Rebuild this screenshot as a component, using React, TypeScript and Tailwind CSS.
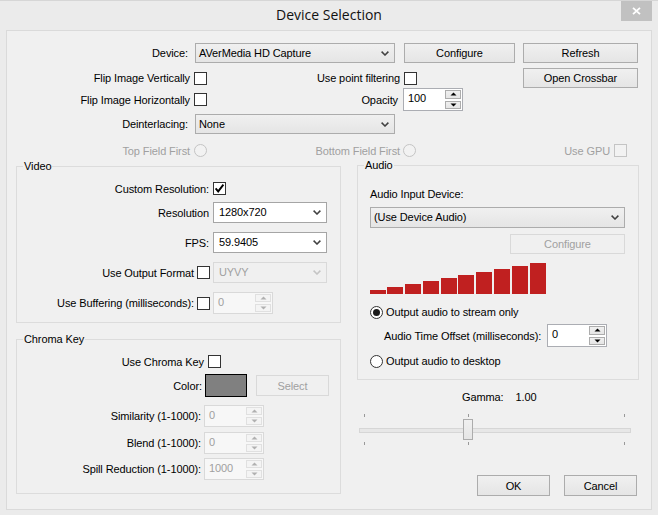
import React from "react";

const Chevron = ({ disabled = false }: { disabled?: boolean }) => (
  <svg width="8" height="5" viewBox="0 0 8 5" className="shrink-0">
    <path d="M0.6 0.6 L4 4 L7.4 0.6" fill="none" stroke={disabled ? "#c4c4c4" : "#404040"} strokeWidth="1.5" />
  </svg>
);

const Checkbox = ({ checked = false, disabled = false }: { checked?: boolean; disabled?: boolean }) => (
  <div
    className={`w-[13px] h-[13px] shrink-0 border flex items-center justify-center ${
      disabled ? "border-[#c4c4c4] bg-[#f2f2f2]" : "border-[#333333] bg-white"
    }`}
  >
    {checked && (
      <svg width="11" height="11" viewBox="0 0 11 11">
        <path d="M1.6 5.4 L4.2 8.4 L9.4 1.6" fill="none" stroke="#000" strokeWidth="1.9" />
      </svg>
    )}
  </div>
);

const Radio = ({ checked = false, disabled = false }: { checked?: boolean; disabled?: boolean }) => (
  <div
    className={`w-[13px] h-[13px] shrink-0 rounded-full border flex items-center justify-center ${
      disabled ? "border-[#c4c4c4] bg-[#f2f2f2]" : "border-[#333333] bg-white"
    }`}
  >
    {checked && <div className="w-[7px] h-[7px] rounded-full bg-[#1a1a1a]" />}
  </div>
);

const Button = ({
  children,
  disabled = false,
  className = "",
}: {
  children: React.ReactNode;
  disabled?: boolean;
  className?: string;
}) => (
  <div
    className={`shrink-0 flex items-center justify-center border ${
      disabled
        ? "border-[#d9d9d9] bg-[#f0f0f0] text-[#a0a0a0]"
        : "border-[#acacac] bg-linear-to-b from-[#f0f0f0] to-[#e5e5e5] text-black"
    } ${className}`}
  >
    {children}
  </div>
);

const Combo = ({
  value,
  variant = "button",
  className = "",
}: {
  value: string;
  variant?: "button" | "white" | "disabled";
  className?: string;
}) => {
  const v =
    variant === "white"
      ? "border-[#a5a5a5] bg-white text-black pl-[5px]"
      : variant === "disabled"
      ? "border-[#d9d9d9] bg-[#f0f0f0] text-[#a0a0a0] pl-[5px]"
      : "border-[#acacac] bg-linear-to-b from-[#f0f0f0] to-[#e5e5e5] text-black pl-[3px]";
  return (
    <div className={`shrink-0 flex items-center justify-between border pr-[5px] ${v} ${className}`}>
      <span className="pb-[1px]">{value}</span>
      <Chevron disabled={variant === "disabled"} />
    </div>
  );
};

const Tri = ({ up, disabled }: { up: boolean; disabled: boolean }) => (
  <svg width="7" height="4" viewBox="0 0 7 4">
    <path d={up ? "M0.5 3.5 L3.5 0.5 L6.5 3.5 Z" : "M0.5 0.5 L3.5 3.5 L6.5 0.5 Z"} fill={disabled ? "#b0b0b0" : "#000"} />
  </svg>
);

const Spin = ({
  value,
  disabled = false,
  className = "",
}: {
  value: string;
  disabled?: boolean;
  className?: string;
}) => (
  <div
    className={`shrink-0 flex border ${
      disabled ? "border-[#d9d9d9] bg-[#f7f7f7] text-[#a0a0a0]" : "border-[#abadb3] bg-white text-black"
    } ${className}`}
  >
    <div className="flex-1 flex items-center pl-[4px] pb-[3px]">{value}</div>
    <div className="w-[17px] flex flex-col gap-[2px] pr-[1px] py-[1px]">
      <div
        className={`flex-1 border flex items-center justify-center ${
          disabled ? "border-[#e0e0e0] bg-[#f4f4f4]" : "border-[#acacac] bg-linear-to-b from-[#f0f0f0] to-[#e5e5e5]"
        }`}
      >
        <Tri up disabled={disabled} />
      </div>
      <div
        className={`flex-1 border flex items-center justify-center ${
          disabled ? "border-[#e0e0e0] bg-[#f4f4f4]" : "border-[#acacac] bg-linear-to-b from-[#f0f0f0] to-[#e5e5e5]"
        }`}
      >
        <Tri up={false} disabled={disabled} />
      </div>
    </div>
  </div>
);

const Group = ({
  label,
  className = "",
  children,
}: {
  label: string;
  className?: string;
  children: React.ReactNode;
}) => (
  <div className={`relative border border-[#dcdcdc] ${className}`}>
    <span className="absolute top-[-8px] left-[6px] px-[1px] bg-[#f0f0f0] leading-[14px]">{label}</span>
    {children}
  </div>
);

const bars = [
  { h: "h-[4px]", ml: "ml-0" },
  { h: "h-[7px]", ml: "ml-[1px]" },
  { h: "h-[10px]", ml: "ml-[2px]" },
  { h: "h-[13px]", ml: "ml-[2px]" },
  { h: "h-[16px]", ml: "ml-[2px]" },
  { h: "h-[19px]", ml: "ml-[1px]" },
  { h: "h-[22px]", ml: "ml-[2px]" },
  { h: "h-[25px]", ml: "ml-[2px]" },
  { h: "h-[28px]", ml: "ml-[2px]" },
  { h: "h-[31px]", ml: "ml-[2px]" },
];

export default function App() {
  return (
    <div className="w-[658px] h-[515px] overflow-hidden bg-[#ebebeb] border-t border-[#d6d6d6] font-['Liberation_Sans',Arial,sans-serif] text-[11px] tracking-[-0.1px] text-black leading-[14px]">
      {/* Title bar */}
      <div className="relative h-[29px] flex items-center justify-center">
        <span className="font-['Open_Sans',sans-serif] text-[14px] tracking-normal text-[#111] pb-[1px]">Device Selection</span>
        <div className="absolute top-0 right-[6px] w-[31px] h-[20px] bg-[#c1c1c1] flex items-center justify-center">
          <svg width="9" height="8" viewBox="0 0 9 8">
            <path d="M1 0.8 L8 7.2 M8 0.8 L1 7.2" stroke="#fff" strokeWidth="1.8" />
          </svg>
        </div>
      </div>

      {/* Client area */}
      <div className="ml-[6px] w-[646px] h-[480px] border border-[#dadada] bg-[#f0f0f0]">
        <div className="pt-[12px]">
          {/* Row 1 */}
          <div className="flex items-center h-[20px]">
            <div className="w-[181px] text-right">Device:</div>
            <Combo value="AVerMedia HD Capture" className="ml-[7px] w-[200px] h-[20px]" />
            <Button className="ml-[9px] w-[111px] h-[20px]">Configure</Button>
            <Button className="ml-[8px] w-[115px] h-[20px]">Refresh</Button>
          </div>
          {/* Row 2 */}
          <div className="flex items-center h-[20px] mt-[5px]">
            <div className="w-[183px] text-right">Flip Image Vertically</div>
            <div className="ml-[4px]">
              <Checkbox />
            </div>
            <div className="w-[193px] text-right">Use point filtering</div>
            <div className="ml-[4px]">
              <Checkbox />
            </div>
            <Button className="ml-[106px] w-[115px] h-[20px]">Open Crossbar</Button>
          </div>
          {/* Row 3 */}
          <div className="flex items-center h-[23px]">
            <div className="w-[183px] text-right">Flip Image Horizontally</div>
            <div className="ml-[4px]">
              <Checkbox />
            </div>
            <div className="w-[191px] text-right">Opacity</div>
            <Spin value="100" className="ml-[5px] w-[60px] h-[23px]" />
          </div>
          {/* Row 4 */}
          <div className="flex items-center h-[20px] mt-[3px]">
            <div className="w-[181px] text-right">Deinterlacing:</div>
            <Combo value="None" className="ml-[7px] w-[200px] h-[20px]" />
          </div>
          {/* Row 5 */}
          <div className="flex items-center h-[13px] mt-[10px] text-[#a0a0a0]">
            <div className="w-[183px] text-right">Top Field First</div>
            <div className="ml-[4px]">
              <Radio disabled />
            </div>
            <div className="w-[193px] text-right">Bottom Field First</div>
            <div className="ml-[3px]">
              <Radio disabled />
            </div>
            <div className="w-[194px] text-right">Use GPU</div>
            <div className="ml-[4px]">
              <Checkbox disabled />
            </div>
          </div>
        </div>

        {/* Lower section */}
        <div className="flex mt-[8px]">
          {/* Left column */}
          <div className="ml-[9px] w-[325px] pt-[1px] flex flex-col">
            <Group label="Video" className="h-[157px]">
              <div className="pt-[15px]">
                <div className="flex items-center h-[13px]">
                  <div className="w-[192px] text-right">Custom Resolution:</div>
                  <div className="ml-[4px]">
                    <Checkbox checked />
                  </div>
                </div>
                <div className="flex items-center h-[21px] mt-[7px]">
                  <div className="w-[192px] text-right">Resolution</div>
                  <Combo value="1280x720" variant="white" className="ml-[4px] w-[114px] h-[21px]" />
                </div>
                <div className="flex items-center h-[21px] mt-[9px]">
                  <div className="w-[192px] text-right">FPS:</div>
                  <Combo value="59.9405" variant="white" className="ml-[4px] w-[114px] h-[21px]" />
                </div>
                <div className="flex items-center h-[21px] mt-[9px]">
                  <div className="w-[177px] text-right">Use Output Format</div>
                  <div className="ml-[3px]">
                    <Checkbox />
                  </div>
                  <Combo value="UYVY" variant="disabled" className="ml-[3px] w-[114px] h-[21px]" />
                </div>
                <div className="flex items-center h-[22px] mt-[9px]">
                  <div className="w-[177px] text-right">Use Buffering (milliseconds):</div>
                  <div className="ml-[3px]">
                    <Checkbox />
                  </div>
                  <Spin value="0" disabled className="ml-[3px] w-[60px] h-[22px]" />
                </div>
              </div>
            </Group>

            <Group label="Chroma Key" className="h-[155px] mt-[16px]">
              <div className="pt-[15px]">
                <div className="flex items-center h-[13px]">
                  <div className="w-[187px] text-right">Use Chroma Key</div>
                  <div className="ml-[4px]">
                    <Checkbox />
                  </div>
                </div>
                <div className="flex items-center h-[23px] mt-[6px]">
                  <div className="w-[185px] text-right">Color:</div>
                  <div className="ml-[3px] w-[42px] h-[23px] bg-[#808080] border border-black" />
                  <Button disabled className="ml-[9px] w-[73px] h-[21px]">
                    Select
                  </Button>
                </div>
                <div className="flex items-center h-[22px] mt-[8px]">
                  <div className="w-[184px] text-right">Similarity (1-1000):</div>
                  <Spin value="0" disabled className="ml-[3px] w-[60px] h-[22px]" />
                </div>
                <div className="flex items-center h-[22px] mt-[5px]">
                  <div className="w-[184px] text-right">Blend (1-1000):</div>
                  <Spin value="0" disabled className="ml-[3px] w-[60px] h-[22px]" />
                </div>
                <div className="flex items-center h-[22px] mt-[4px]">
                  <div className="w-[184px] text-right">Spill Reduction (1-1000):</div>
                  <Spin value="1000" disabled className="ml-[3px] w-[60px] h-[22px]" />
                </div>
              </div>
            </Group>
          </div>

          {/* Right column */}
          <div className="ml-[16px] w-[282px] flex flex-col">
            <Group label="Audio" className="h-[215px]">
              <div className="pl-[12px] w-[267px] flex flex-col">
                <div className="mt-[21px] h-[14px]">Audio Input Device:</div>
                <Combo value="(Use Device Audio)" className="mt-[6px] w-[255px] h-[21px]" />
                <Button disabled className="mt-[6px] self-end w-[115px] h-[20px]">
                  Configure
                </Button>
                <div className="mt-[9px] h-[31px] flex items-end">
                  {bars.map((b, i) => (
                    <div key={i} className={`w-[16px] bg-[#c02020] ${b.h} ${b.ml}`} />
                  ))}
                </div>
                <div className="mt-[11px] h-[14px] flex items-center">
                  <Radio checked />
                  <span className="ml-[3px]">Output audio to stream only</span>
                </div>
                <div className="mt-[5px] h-[23px] flex items-center">
                  <div className="w-[177px] pl-[14px]">Audio Time Offset (milliseconds):</div>
                  <Spin value="0" className="w-[60px] h-[23px]" />
                </div>
                <div className="mt-[7px] h-[14px] flex items-center">
                  <Radio />
                  <span className="ml-[3px]">Output audio to desktop</span>
                </div>
              </div>
            </Group>

            <div className="mt-[10px] h-[14px] flex pl-[105px] gap-[12px]">
              <span>Gamma:</span>
              <span>1.00</span>
            </div>

            <div className="relative mt-[10px] ml-[2px] w-[272px] h-[32px]">
              <div className="absolute top-0 left-[5px] w-px h-[3px] bg-[#999999]" />
              <div className="absolute top-0 left-[109px] w-px h-[3px] bg-[#999999]" />
              <div className="absolute top-0 left-[265px] w-px h-[3px] bg-[#999999]" />
              <div className="absolute top-[14px] left-0 w-[272px] h-[5px] border border-[#d6d6d6] bg-[#e7e7e7]" />
              <div className="absolute top-[5px] left-[104px] w-[10px] h-[21px] border border-[#acacac] bg-linear-to-b from-[#f0f0f0] to-[#e5e5e5]" />
              <div className="absolute top-[28px] left-[5px] w-px h-[3px] bg-[#999999]" />
              <div className="absolute top-[28px] left-[109px] w-px h-[3px] bg-[#999999]" />
              <div className="absolute top-[28px] left-[265px] w-px h-[3px] bg-[#999999]" />
            </div>

            <div className="mt-[29px] flex justify-end pr-[2px] gap-[14px]">
              <Button className="w-[73px] h-[21px]">OK</Button>
              <Button className="w-[73px] h-[21px]">Cancel</Button>
            </div>
          </div>
        </div>
      </div>
    </div>
  );
}
